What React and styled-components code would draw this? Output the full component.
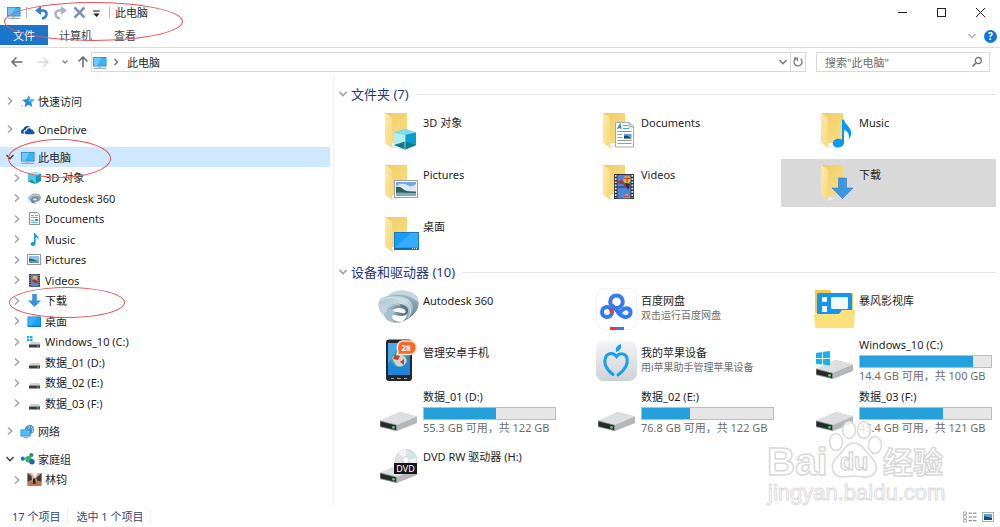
import React, { useState } from "react";
import styled, { createGlobalStyle } from "styled-components";

const GlobalStyle = createGlobalStyle`
    * {
        box-sizing: border-box;
    }
    body {
        margin: 0;
        background: #fff;
        color: #1e1e1e;
        font-family: "Noto Sans", "Noto Sans CJK SC", sans-serif;
        font-size: 11px;
        line-height: 15px;
    }
    button, input {
        font: inherit;
        color: inherit;
    }
    button {
        padding: 0;
        border: 0;
        background: none;
    }
    a {
        color: inherit;
        text-decoration: none;
    }
    ul {
        list-style: none;
        margin: 0;
        padding: 0;
    }
    svg {
        display: block;
        flex: none;
    }
`;

/* ---------- small icons ---------- */

const Small = ({ children, size = 15 }) => (
    <svg width={size} height={size} viewBox="0 0 15 15" aria-hidden="true">
        {children}
    </svg>
);

const PcIcon = () => (
    <Small>
        <rect x="1" y="2" width="13.500" height="9.500" fill="#2c86c4" />
        <rect x="1.800" y="2.800" width="11.900" height="7.900" fill="#3eb1fb" />
        <path d="M1.800 2.800h7.500L5 10.700H1.800z" fill="#6cc8ff" />
        <path d="M6 11.500h3v1.300H6z" fill="#a9b8c4" />
        <path d="M1.500 13.300h12.500" stroke="#8b9cab" />
    </Small>
);

const StarIcon = () => (
    <Small>
        <path d="M8.800 1.500l1.500 3.800 4.300.1-3.300 3.100 1 4.500-3.800-2.200-4 2.400 1-4.500L1.900 5.700l4.800-.4z" fill="#1d8fe0" />
        <path d="M8.800 1.500l1.500 3.800 4.300.1-3.300 2.500-3-1z" fill="#5bb9f3" />
        <path d="M1 12.500l2-1.500" stroke="#8cc5ee" />
    </Small>
);

const CloudIcon = () => (
    <Small>
        <path d="M1 10.500c-.4-2 .9-3.200 2.300-3.300C3.700 4.200 8 2.600 10 5.200c-3.500-.4-4 1.900-4.200 2.600C3.600 8 3.100 10 3.900 11.700H2.300C1.500 11.700 1.100 11 1 10.500z" fill="#174a9b" />
        <path d="M6.400 12.200c-2.400 0-2.500-3.400.2-3.500.3-3 4-3.400 5-.9 1.500-.1 2 .8 1.900 1.600 1.800.5 1.300 2.800-.2 2.800z" fill="#0f52b4" />
    </Small>
);

const CubeIcon = () => (
    <Small>
        <path d="M1 3.500L8 1.500l6 2-5 2.300z" fill="#9be8ef" />
        <path d="M1 3.500l7.500 2.300V14L1 11.500z" fill="#4fccdc" />
        <path d="M8.500 5.800L14 3.500V11l-5.500 3z" fill="#0d9cc0" />
        <path d="M1 11.500l4-1.500 3.500 4z" fill="#148a9c" />
    </Small>
);

const SwirlIcon = () => (
    <Small>
        <ellipse cx="8.300" cy="6.700" rx="5.700" ry="4.200" fill="#86a1b2" />
        <path d="M1 6.500C1.500 4.500 4 4 5 4 9 1.500 13.500 4 14 6.500 11 4.500 7 4.800 5 6c-1.500 1-2 3-1.500 4.500C2 9.800.8 8 1 6.500z" fill="#aec3cf" />
        <path d="M3.500 9.500c0-2.500 3-3.500 5-3.300 2.500.1 3.500 2 1.500 3.500-1 .8-2 .7-3 .3.200 1 1.500 2 3 2.200-3.500 1-6.500-.5-6.500-2.700z" fill="#6c8a9d" />
        <ellipse cx="8" cy="8.500" rx="1.800" ry="1" fill="#fff" />
    </Small>
);

const DocIcon = () => (
    <Small>
        <path d="M2.500 1.500h8l2 2v10h-10z" fill="#fdfdfd" stroke="#8a9096" />
        <path d="M4 4.500h3M8 4.500h3M4 6.500h7M4 9.500h3M4 11.500h7" stroke="#5aaee0" />
        <rect x="8" y="8" width="3" height="2" fill="#3a86bd" />
    </Small>
);

const MusicIcon = () => (
    <Small>
        <path d="M7 1h1.300c.3 2.300 3.900 3 3.200 7-.5-1.500-1.400-2.500-3-2.800v6.300C8.400 14.500 3.700 14.800 3.600 12 3.700 10.300 5.500 9.600 7 10z" fill="#0a9af2" />
    </Small>
);

const PictureIcon = () => (
    <Small>
        <rect x=".5" y="2.500" width="13" height="10" fill="#fff" stroke="#92989d" />
        <rect x="2" y="4" width="10" height="7" fill="#8cc2ee" />
        <path d="M2 6.500c3 0 6 1.500 10 3V11H2z" fill="#2c6a70" />
        <path d="M2 10h10" stroke="#a9c6d8" />
    </Small>
);

const VideoIcon = () => (
    <Small>
        <rect x="2" y="1" width="11" height="13" fill="#36383c" />
        <rect x="4" y="1.500" width="7" height="12" fill="#5a86d6" />
        <circle cx="8" cy="5" r="2.200" fill="#e8b13a" />
        <path d="M4.500 8l3-2 3.500 3-2 1.500z" fill="#a63030" />
        <path d="M3 2v12M12 2v12" stroke="#dfe3e6" strokeDasharray="1 1.300" />
    </Small>
);

const DownIcon = () => (
    <Small>
        <path d="M5.200 1h4.600v6.500H14L7.500 14 1 7.500h4.200z" fill="#3a92e0" />
    </Small>
);

const DesktopIcon = () => (
    <Small>
        <rect x=".5" y="2.500" width="13.500" height="10.500" fill="#1078c8" />
        <path d="M1.300 3.300h11.900v8.200H1.300z" fill="#1aa0fc" />
        <path d="M1.300 3.300h9l-6 8.200h-3z" fill="#3cb2ff" />
    </Small>
);

const DiskBody = () => (
    <>
        <path d="M4 8h8l1.500 2.500h-11z" fill="#cfd1d3" />
        <rect x="2" y="10.500" width="11" height="3" fill="#3a3d3f" />
        <rect x="10" y="11.500" width="2" height="1" fill="#43d344" />
    </>
);

const DiskIcon = () => (
    <Small>
        <DiskBody />
    </Small>
);

const WinDiskIcon = () => (
    <Small>
        <DiskBody />
        <path d="M0 2h2.300v2.300H0zM3 2h2.500v2.300H3zM0 5h2.300v2.300H0zM3 5h2.500v2.300H3z" fill="#12b1ee" />
    </Small>
);

const NetworkIcon = () => (
    <Small>
        <circle cx="9.500" cy="5.500" r="4.700" fill="#4797c9" />
        <path d="M7 2c2-1 3 1 2 2.500S6 5 5.500 6M11 3c2 1 2 3 1.500 5" fill="none" stroke="#a9d5ee" />
        <rect x=".5" y="5.500" width="10" height="7" fill="#2484c6" />
        <path d="M1.300 6.300h8.400v5.400H1.300z" fill="#52bcf8" />
        <path d="M3.500 13.700h4.500" stroke="#8b9cab" />
    </Small>
);

const HomeGroupIcon = () => (
    <Small>
        <path d="M3 7l4-1 4-3M8 8l4 3" stroke="#7bbbd8" fill="none" />
        <circle cx="2.800" cy="6.700" r="2.100" fill="#1f72cc" />
        <circle cx="11.300" cy="3" r="2.100" fill="#2a7fc4" />
        <circle cx="8.500" cy="7.200" r="3.200" fill="#34bb47" />
        <circle cx="12" cy="9.700" r="2.700" fill="#1b62bd" />
    </Small>
);

const UserPhotoIcon = () => (
    <Small>
        <rect x=".5" y="1" width="14" height="13" fill="#c9b6a4" />
        <path d="M.5 1l4 3 .5 4-4.500 2zM9 6l5.500-5v9l-4-1z" fill="#4a3730" />
        <path d="M4.500 1h6L8 6z" fill="#f1eff0" />
        <path d="M.5 10l6.500-2 7.500 2v4H.5z" fill="#b77a4e" />
        <path d="M6 6.500h2.500V12H6z" fill="#33201c" />
    </Small>
);

const ChevronIcon = ({ open, color }) => (
    <svg width="10" height="10" viewBox="0 0 10 10" aria-hidden="true">
        <path
            d={open ? "M1.500 3L5 6.700 8.500 3" : "M3 1.500L6.700 5 3 8.500"}
            fill="none"
            stroke={color || (open ? "#404040" : "#a3a3a3")}
            strokeWidth="1.500"
        />
    </svg>
);

/* ---------- large icons ---------- */

const Large = ({ children }) => (
    <svg width="48" height="48" viewBox="0 0 48 48" aria-hidden="true">
        {children}
    </svg>
);

const Folder = ({ children }) => (
    <Large>
        <defs>
            <linearGradient id="folderBack" x1="0" y1="0" x2="1" y2="1">
                <stop offset="0" stopColor="#efcb66" />
                <stop offset="1" stopColor="#fbdf85" />
            </linearGradient>
            <linearGradient id="folderFlap" x1="0" y1="0" x2="1" y2="1">
                <stop offset="0" stopColor="#ffeaa6" />
                <stop offset="1" stopColor="#f7d77c" />
            </linearGradient>
        </defs>
        <path d="M17 38l-.5 4 8-3z" fill="#eee" />
        <path d="M10 6h22v30H17z" fill="url(#folderBack)" />
        <path d="M10 6l5.500 3.500c1 .7 1.700 2 1.700 3.500v28L11 36.500c-.7-.5-1-1-1-2z" fill="url(#folderFlap)" />
        {children}
    </Large>
);

const FolderCube = () => (
    <Folder>
        <path d="M30 22l11 3.500V38l-11 4.500L19 38V25.500z" fill="#4fc8d6" />
        <path d="M30 22l11 3.500L30 28l-11-2.500z" fill="#7adfe6" />
        <path d="M19 25.500L30 28v14.500L19 38z" fill="#b3ebee" />
        <path d="M30 28l11-2.500V38l-11 4.500z" fill="#079ed0" />
        <path d="M19 38l11-3.500 11 3.500-11 4.500z" fill="#0b7d8c" />
        <path d="M30 28v14" stroke="#d3f7f7" strokeWidth=".7" />
    </Folder>
);

const FolderDoc = () => (
    <Folder>
        <path d="M22.500 15.500H36l4.500 4.500v20h-18z" fill="#fff" stroke="#a3a9ad" />
        <path d="M36 15.500V20h4.500z" fill="#dfe3e6" stroke="#8f969b" strokeWidth=".7" />
        <path d="M24.500 22l2.500-4.500 1 4.500M25.500 20.500h2.500" stroke="#1e8cd4" fill="none" strokeWidth="1.300" />
        <path d="M30 18.500h5M30 21.500h6M24.500 24.500h14" stroke="#46a9df" strokeWidth="1.200" />
        <path d="M24.500 27.500h5M24.500 30.500h5M24.500 33.500h14M24.500 36.500h14" stroke="#8d9ca6" />
        <rect x="31" y="27" width="7.500" height="4.500" fill="#5aa4da" />
        <path d="M31 29l3-.5 4.500 3H31z" fill="#23485a" />
    </Folder>
);

const FolderMusic = () => (
    <Folder>
        <path d="M31 12.500h2c.7 5.500 8.800 8 7 15.500-.6 2-1.500 3.500-2.500 4.300 1.500-5-1-8.300-4.500-9.300v12.500c0 6-11 7-11.300.8.300-4.300 5.600-5.800 9.300-3.800z" fill="#079bf5" />
    </Folder>
);

const FolderPicture = () => (
    <Folder>
        <rect x="19.500" y="21.500" width="23" height="17" fill="#f4f5f6" stroke="#9da2a6" />
        <rect x="21" y="23" width="20" height="14" fill="#77a9e8" />
        <path d="M21 27q6-4 11-1t9-1v7H21z" fill="#d9e9fa" />
        <path d="M21 28q4-1 7 2t13 3v2H21z" fill="#31604f" />
        <path d="M21 33.500l20 .5v3H21z" fill="#79abc4" />
    </Folder>
);

const FolderVideo = () => (
    <Folder>
        <rect x="21" y="15" width="20" height="25" fill="#34353a" />
        <rect x="24.500" y="16" width="13" height="11.500" fill="#4b85db" />
        <rect x="24.500" y="28.500" width="13" height="11" fill="#4b85db" />
        <circle cx="34" cy="20.500" r="3.700" fill="#d7c13c" />
        <path d="M30.500 19.500h7M34 17.500v6" stroke="#d04b38" strokeWidth="1.300" />
        <path d="M25 22l4-1 3 4 4 1-3 3-3-4-5-.5z" fill="#b03044" />
        <path d="M32 24l5 1-2 6z" fill="#2f3038" />
        <path d="M30 39q4-8 7 0z" fill="#dab23a" />
        <path d="M31 37.500h5" stroke="#c63c34" strokeWidth="1.500" />
        <path d="M22.700 16v23M39.300 16v23" stroke="#e9ecee" strokeWidth="1.700" strokeDasharray="1.700 1.500" />
    </Folder>
);

const FolderDown = () => (
    <Folder>
        <path d="M27.500 19h8v10h6.500L31.500 39.500 21 29h6.500z" fill="#3c96e6" stroke="#2d7cc8" strokeWidth=".6" />
    </Folder>
);

const FolderDesktop = () => (
    <Folder>
        <rect x="19" y="21" width="25" height="18" fill="#1479bd" />
        <path d="M20 22h23v14.500H20z" fill="#159dfb" />
        <path d="M20 36.500L36 22h7v14.500z" fill="#35adff" />
        <path d="M20 37.500h23" stroke="#0a67a5" />
        <path d="M37 37.500h6" stroke="#d6ecfa" strokeDasharray="1 1" />
    </Folder>
);

const AutodeskIcon = () => (
    <Large>
        <defs>
            <linearGradient id="swirlA" x1="0" y1="0" x2="1" y2="1">
                <stop offset="0" stopColor="#a9c3d0" />
                <stop offset=".5" stopColor="#c9dbe3" />
                <stop offset="1" stopColor="#7f9cad" />
            </linearGradient>
            <linearGradient id="swirlB" x1="0" y1="0" x2="0" y2="1">
                <stop offset="0" stopColor="#a5bfcb" />
                <stop offset="1" stopColor="#587a90" />
            </linearGradient>
            <linearGradient id="swirlC" x1="0" y1="0" x2="1" y2="0">
                <stop offset="0" stopColor="#b9ced8" />
                <stop offset="1" stopColor="#456479" />
            </linearGradient>
        </defs>
        <path d="M13 11C19 4 36 4 42 12c5 9-1 19-15 25 6-5 7-9 6-13-3-7-12-9-22-7z" fill="url(#swirlB)" />
        <path d="M3.500 18C4 13 9 11 14 11c6 0 15-1 20 4 6 5 5 14-3 19 2-7-2-12-9-14-6-2-9 2-11 6-1 2-1 4 0 6-5-2-8-8-7.500-14z" fill="url(#swirlA)" />
        <path d="M13 11C19 4 33 4 40 10c2 2 3.500 5 3.500 8C37 10 26 8 13 11z" fill="#c5d7df" />
        <path d="M9 29c0-8 8-11 16-10 7 1 10 6 7 10-3 3-8 2-12 1-3-1-4 1-3 3 2 3 6 4 10 4-9 2-18-1-18-8z" fill="url(#swirlC)" />
        <path d="M9.500 29c1 5 5 8 11 8.500-3-2-4-5-2.500-8 1-2 3-3 5-3.500-6-3-12-2-13.500 3z" fill="#a9c1cd" />
        <path d="M18 26c2-3.500 9-4 12.500-.5 1 2-1 3-3.500 2.500-3-.7-6-1-9-2z" fill="#fff" />
        <path d="M4 16c6-4 17-5 25 0s8 12 4 17M10 27c2-6 8-8 15-7" fill="none" stroke="#e2ecf0" strokeWidth=".8" />
    </Large>
);

const NetdiskIcon = () => (
    <Large>
        <rect x="3.500" y="3.500" width="40" height="41" rx="8" fill="#fff" stroke="#f3f3f3" />
        <g fill="none" stroke="#3479f6" strokeWidth="4">
            <circle cx="23.500" cy="16.700" r="6.300" />
            <circle cx="14" cy="27" r="5" />
            <path d="M24.500 30l5-5c3-3.500 8.500-1.500 8 3-.7 4.500-6 5-9 2.500L19 20.500" />
            <path d="M17.500 23.500l2 5" stroke="#d9403a" />
        </g>
        <path d="M17 42h7v3h-7z" fill="#e13b3b" />
        <path d="M24 42h7v3h-7z" fill="#3a78f2" />
    </Large>
);

const StormFolderIcon = () => (
    <Large>
        <path d="M4 5h15l2 3h21v20H4z" fill="#f6cb48" />
        <rect x="6" y="8" width="35" height="22" rx="2" fill="#0f96fb" />
        <path d="M11 12h5v5h-5zM11 21h5v6h-5z" fill="#fff" />
        <rect x="20" y="12" width="17" height="12" rx="1" fill="#f5f9fe" />
        <path d="M3 29h25l3-4h13l-1 16.500c0 1-.6 1.500-1.500 1.500H5.500C4.600 43 4 42.400 4 41.500z" fill="#fbe07c" />
    </Large>
);

const PhoneIcon = () => (
    <Large>
        <rect x="11" y="2.500" width="26" height="41.500" rx="3" fill="#25272a" />
        <rect x="13" y="6" width="22" height="32" fill="#1e86d8" />
        <path d="M13 6h14L13 27z" fill="#48a9ee" />
        <circle cx="24" cy="22" r="8" fill="#38b3a0" />
        <path d="M17 21q4-6 10-3t4 8q-5 6-10 2z" fill="#d9cfd0" />
        <path d="M20 17l5 2-2 4-5-1zM25 25l4-3v6z" fill="#c44130" />
        <path d="M16 41.500h3M22 41.500h4M29 41.500h3" stroke="#a6a9ad" />
        <path d="M28 4h7c9 0 8 13 0 13.500H22l1-2.500c-2-5 0-11 5-11z" fill="#fa6926" stroke="#fbe3d5" strokeWidth="1.500" />
        <text x="31" y="14" textAnchor="middle" fontSize="8" fontWeight="700" fill="#fff">28</text>
    </Large>
);

const AppleAssistantIcon = () => (
    <Large>
        <defs>
            <linearGradient id="assistantBg" x1="0" y1="0" x2="0" y2="1">
                <stop offset="0" stopColor="#f3f4f6" />
                <stop offset="1" stopColor="#ced1d6" />
            </linearGradient>
        </defs>
        <rect x="3" y="4" width="41" height="40" rx="8" fill="url(#assistantBg)" />
        <path d="M20 37.500c-7-5-10-12-7-18 3-4.500 8-3.500 10.500 0 3-4 9-3.500 10.500 1.500 1.500 7-3.500 13-9 17" fill="none" stroke="#18a1ea" strokeWidth="3" strokeLinecap="round" />
        <path d="M23 15c-1-4 1-6.500 5-8 .8 4-1 7-5 8z" fill="#18a1ea" />
    </Large>
);

const DriveShape = () => (
    <>
        <path d="M5 32l20-9 17 4.500V34L22 42 5 38z" fill="#b4b6b9" />
        <path d="M5 31.500L25 23l17 4.500-20 8.500z" fill="#dddee0" />
        <path d="M5 31.500L22 36v6L5 38z" fill="#8b8d8f" />
        <path d="M5.500 32.500L21 36.500V41L5.500 37.300z" fill="#26292b" />
        <circle cx="18.500" cy="38.300" r="1.400" fill="#45e34b" />
    </>
);

const DriveIcon = () => (
    <Large>
        <DriveShape />
    </Large>
);

const WindowsDriveIcon = () => (
    <Large>
        <DriveShape />
        <path d="M5 16l6-1v6H5zM12 14.800l7-.8v7h-7zM5 22h6v5.500l-6-.8zM12 22h7v6.500l-7-.9z" fill="#0fb5f0" />
    </Large>
);

const DvdIcon = () => (
    <Large>
        <DriveShape />
        <circle cx="31" cy="19" r="10.700" fill="#dfe2e4" stroke="#c6c9cb" strokeWidth=".7" />
        <path d="M31 19L23 12q4-4 8-4zM31 19l9-4q2 4 1 8z" fill="#f5f0f5" />
        <path d="M31 19l6-8q3 1.500 4 6z" fill="#cfe9dc" />
        <circle cx="31" cy="19" r="3.300" fill="#fff" stroke="#bfc2c4" strokeWidth=".7" />
        <rect x="19" y="22" width="23" height="11" fill="#161616" />
        <text x="30.500" y="31" textAnchor="middle" fontSize="9" fill="#fff">DVD</text>
    </Large>
);

/* ---------- data ---------- */

const treeData = [
    { name: "快速访问", icon: StarIcon },
    { name: "OneDrive", icon: CloudIcon },
    {
        name: "此电脑",
        icon: PcIcon,
        selected: true,
        children: [
            { name: "3D 对象", icon: CubeIcon },
            { name: "Autodesk 360", icon: SwirlIcon },
            { name: "Documents", icon: DocIcon },
            { name: "Music", icon: MusicIcon },
            { name: "Pictures", icon: PictureIcon },
            { name: "Videos", icon: VideoIcon },
            { name: "下载", icon: DownIcon },
            { name: "桌面", icon: DesktopIcon },
            { name: "Windows_10 (C:)", icon: WinDiskIcon },
            { name: "数据_01 (D:)", icon: DiskIcon },
            { name: "数据_02 (E:)", icon: DiskIcon },
            { name: "数据_03 (F:)", icon: DiskIcon },
        ],
    },
    { name: "网络", icon: NetworkIcon },
    {
        name: "家庭组",
        icon: HomeGroupIcon,
        children: [{ name: "林钧", icon: UserPhotoIcon }],
    },
];

const folders = [
    { name: "3D 对象", icon: FolderCube },
    { name: "Documents", icon: FolderDoc },
    { name: "Music", icon: FolderMusic },
    { name: "Pictures", icon: FolderPicture },
    { name: "Videos", icon: FolderVideo },
    { name: "下载", icon: FolderDown, selected: true },
    { name: "桌面", icon: FolderDesktop },
];

const devices = [
    { name: "Autodesk 360", icon: AutodeskIcon },
    { name: "百度网盘", icon: NetdiskIcon, note: "双击运行百度网盘" },
    { name: "暴风影视库", icon: StormFolderIcon },
    { name: "管理安卓手机", icon: PhoneIcon },
    { name: "我的苹果设备", icon: AppleAssistantIcon, note: "用i苹果助手管理苹果设备" },
    { name: "Windows_10 (C:)", icon: WindowsDriveIcon, used: 86, space: "14.4 GB 可用，共 100 GB" },
    { name: "数据_01 (D:)", icon: DriveIcon, used: 55, space: "55.3 GB 可用，共 122 GB" },
    { name: "数据_02 (E:)", icon: DriveIcon, used: 37, space: "76.8 GB 可用，共 122 GB" },
    { name: "数据_03 (F:)", icon: DriveIcon, used: 63, space: "45.4 GB 可用，共 121 GB" },
    { name: "DVD RW 驱动器 (H:)", icon: DvdIcon },
];

/* ---------- components ---------- */

const TitleBar = () => (
    <TitleRow>
        <PcIcon />
        <Divider />
        <QuickTools>
            <button aria-label="撤消">
                <Small>
                    <path d="M3.500 5.500h6c4.500 1 4 7-1.500 8" fill="none" stroke="#2f7fd0" strokeWidth="2.500" />
                    <path d="M1 5.500L7 1v9z" fill="#2f7fd0" />
                </Small>
            </button>
            <button aria-label="恢复">
                <Small>
                    <path d="M11.500 5.500h-6c-4.500 1-4 7 1.500 8" fill="none" stroke="#a9b6cf" strokeWidth="2.500" />
                    <path d="M14 5.500L8 1v9z" fill="#a9b6cf" />
                </Small>
            </button>
            <button aria-label="删除">
                <Small>
                    <path d="M2.500 2.500l10 10M12.500 2.500l-10 10" stroke="#7e93b8" strokeWidth="2.500" />
                </Small>
            </button>
            <button aria-label="自定义快速访问工具栏">
                <Small size={11}>
                    <path d="M3 5.500h9" stroke="#222" strokeWidth="1.500" />
                    <path d="M3 9h9l-4.500 4.500z" fill="#222" />
                </Small>
            </button>
        </QuickTools>
        <Divider />
        <span>此电脑</span>
        <WindowButtons>
            <button aria-label="最小化">
                <svg width="11" height="11" viewBox="0 0 11 11">
                    <path d="M1 5.500h9" stroke="#222" />
                </svg>
            </button>
            <button aria-label="最大化">
                <svg width="11" height="11" viewBox="0 0 11 11">
                    <rect x="1.500" y="1.500" width="8" height="8" fill="none" stroke="#222" />
                </svg>
            </button>
            <button aria-label="关闭">
                <svg width="11" height="11" viewBox="0 0 11 11">
                    <path d="M1 1l9 9M10 1l-9 9" stroke="#222" />
                </svg>
            </button>
        </WindowButtons>
    </TitleRow>
);

const Ribbon = () => (
    <RibbonRow>
        <FileTab>文件</FileTab>
        <Tab>计算机</Tab>
        <Tab>查看</Tab>
        <RibbonEnd>
            <button aria-label="展开功能区">
                <ChevronIcon open color="#b0b0b0" />
            </button>
            <HelpButton aria-label="帮助">?</HelpButton>
        </RibbonEnd>
    </RibbonRow>
);

const ArrowIcon = ({ d, color }) => (
    <svg width="12" height="12" viewBox="0 0 12 12" aria-hidden="true">
        <path d={d} fill="none" stroke={color} strokeWidth="1.500" />
    </svg>
);

const NavBar = () => (
    <NavRow>
        <NavButtons>
            <button aria-label="后退">
                <ArrowIcon d="M11.500 6H1M5.500 1.500L1 6l4.500 4.500" color="#6a6a6a" />
            </button>
            <button aria-label="前进">
                <ArrowIcon d="M.5 6H11M6.500 1.500L11 6l-4.500 4.500" color="#d8d8d8" />
            </button>
            <button aria-label="最近位置">
                <svg width="8" height="8" viewBox="0 0 8 8" aria-hidden="true">
                    <path d="M1.500 2.500L4 5l2.500-2.500" fill="none" stroke="#888" strokeWidth="1.500" />
                </svg>
            </button>
            <button aria-label="上移">
                <ArrowIcon d="M6 11.500V1M1.500 5.500L6 1l4.500 4.500" color="#6a6a6a" />
            </button>
        </NavButtons>
        <AddressBox>
            <PcIcon />
            <svg width="8" height="8" viewBox="0 0 8 8" aria-hidden="true">
                <path d="M2.500 1L5.500 4l-3 3" fill="none" stroke="#666" strokeWidth="1.300" />
            </svg>
            <a href="#pc">此电脑</a>
            <AddressEnd>
                <button aria-label="历史记录">
                    <ChevronIcon open color="#777" />
                </button>
                <RefreshButton aria-label="刷新">
                    <svg width="12" height="12" viewBox="0 0 12 12">
                        <path d="M8.500 2.800A4 4 0 1 1 3.800 2.600M2 2.200h3.300v3" fill="none" stroke="#777" strokeWidth="1.300" />
                    </svg>
                </RefreshButton>
            </AddressEnd>
        </AddressBox>
        <SearchBox>
            <input type="search" aria-label="搜索" placeholder={'搜索"此电脑"'} />
            <svg width="12" height="12" viewBox="0 0 12 12" aria-hidden="true">
                <circle cx="7.300" cy="4.500" r="3" fill="none" stroke="#777" strokeWidth="1.300" />
                <path d="M5 6.900L1.500 10.500" stroke="#777" strokeWidth="1.700" />
            </svg>
        </SearchBox>
    </NavRow>
);

const TreeItem = ({ item, level = 0 }) => {
    const [open, setOpen] = useState(Boolean(item.children));
    const Icon = item.icon;
    return (
        <li>
            <TreeRow $level={level} $selected={item.selected}>
                <Toggle aria-label={item.name} aria-expanded={open} onClick={() => setOpen(!open)}>
                    <ChevronIcon open={open} />
                </Toggle>
                <Icon />
                <a href="#item">{item.name}</a>
            </TreeRow>
            {open && item.children && (
                <SubTree>
                    {item.children.map((child) => (
                        <TreeItem key={child.name} item={child} level={level + 1} />
                    ))}
                </SubTree>
            )}
        </li>
    );
};

const TileGroup = ({ title, items }) => {
    const [open, setOpen] = useState(true);
    return (
        <section>
            <GroupHeader aria-expanded={open} onClick={() => setOpen(!open)}>
                <ChevronIcon open={open} color="#999" />
                {title} ({items.length})
            </GroupHeader>
            {open && (
                <TileGrid>
                    {items.map(({ name, icon: Icon, note, used, space, selected }) => (
                        <Tile key={name} href="#item" $selected={selected}>
                            <Icon />
                            <TileText $drive={used !== undefined}>
                                <span>{name}</span>
                                {note && <Note>{note}</Note>}
                                {used !== undefined && (
                                    <>
                                        <Bar>
                                            <BarFill style={{ width: `${used}%` }} />
                                        </Bar>
                                        <Space>{space}</Space>
                                    </>
                                )}
                            </TileText>
                        </Tile>
                    ))}
                </TileGrid>
            )}
        </section>
    );
};

const StatusBar = () => (
    <StatusRow>
        <StatusText>17 个项目</StatusText>
        <StatusText>选中 1 个项目</StatusText>
        <ViewButtons>
            <button aria-label="详细信息">
                <svg width="15" height="12" viewBox="0 0 15 12">
                    <path d="M1.500 1h3v2.500h-3zM1.500 4.700h3v2.500h-3zM1.500 8.500h3V11h-3z" fill="#fff" stroke="#999" strokeWidth=".8" />
                    <path d="M6.500 2.200h8M6.500 6h8M6.500 9.700h8" stroke="#777" strokeDasharray="3.500 1" />
                </svg>
            </button>
            <button aria-label="大图标">
                <svg width="12" height="12" viewBox="0 0 12 12">
                    <rect x=".5" y="1.500" width="11" height="9" fill="#fff" stroke="#9fb0bd" />
                    <rect x="2" y="3" width="8" height="6" fill="#5aa2d8" />
                    <path d="M2 5l8 2v2H2z" fill="#1d4a6d" />
                </svg>
            </button>
        </ViewButtons>
    </StatusRow>
);

const BaiduMark = () => (
    <Watermark width="190" height="80" viewBox="0 0 190 80">
        <g fill="#fff" fillOpacity=".8" stroke="#d9d9d9" strokeWidth="1.500">
            <ellipse cx="71" cy="39" rx="6.500" ry="8.500" />
            <ellipse cx="84" cy="27" rx="6.500" ry="8.500" />
            <ellipse cx="99" cy="27" rx="6.500" ry="8.500" />
            <ellipse cx="110" cy="42" rx="6.500" ry="8.500" />
            <path d="M89 40c8 0 11 8 16 13 9 8 8 20-3 21-5 .5-8-1-13-1s-8 1.500-12 1c-11-1-13-13-4-21 6-5 8-13 16-13z" />
            <g fontWeight="700" fontFamily='"Liberation Sans", "Noto Sans CJK SC", sans-serif'>
                <text x="2" y="72" fontSize="39">Bai</text>
                <text x="75" y="67" fontSize="23">du</text>
                <text x="118" y="70" fontSize="30">经验</text>
            </g>
        </g>
    </Watermark>
);

export default function App() {
    return (
        <Window>
            <GlobalStyle />
            <TitleBar />
            <Ribbon />
            <NavBar />
            <Body>
                <Sidebar>
                    <Tree>
                        {treeData.map((item) => (
                            <TreeItem key={item.name} item={item} />
                        ))}
                    </Tree>
                </Sidebar>
                <Splitter />
                <Content>
                    <TileGroup title="文件夹" items={folders} />
                    <TileGroup title="设备和驱动器" items={devices} />
                </Content>
            </Body>
            <StatusBar />
            <Ring $left={4} $top={2} $width={179} $height={39} />
            <Ring $left={8} $top={139} $width={103} $height={39} />
            <Ring $left={9} $top={287} $width={116} $height={31} />
            <BaiduMark />
            <WatermarkUrl>jingyan.baidu.com</WatermarkUrl>
        </Window>
    );
}

const Window = styled.div`
    position: relative;
    display: flex;
    flex-direction: column;
    min-height: 100vh;
`;

const TitleRow = styled.header`
    display: flex;
    align-items: center;
    gap: 5px;
    height: 24px;
    padding-left: 6px;
`;

const Divider = styled.span`
    width: 1px;
    height: 11px;
    background: #b5b5b5;
`;

const QuickTools = styled.div`
    display: flex;
    align-items: center;
    gap: 4px;
    margin: 0 2px;
`;

const WindowButtons = styled.div`
    display: flex;
    margin-left: auto;
    button {
        display: flex;
        align-items: center;
        justify-content: center;
        width: 39px;
        height: 24px;
    }
`;

const RibbonRow = styled.nav`
    display: flex;
    align-items: flex-start;
    height: 24px;
    padding-top: 1px;
    border-bottom: 1px solid #dcdcdc;
`;

const Tab = styled.button`
    height: 20px;
    padding: 0 11px;
    color: #444;
`;

const FileTab = styled(Tab)`
    width: 48px;
    background: #1976ca;
    color: #fff;
`;

const RibbonEnd = styled.div`
    display: flex;
    align-items: center;
    gap: 7px;
    height: 22px;
    margin-left: auto;
    padding-right: 3px;
`;

const HelpButton = styled.button`
    width: 13px;
    height: 13px;
    border-radius: 50%;
    background: #0f78d4;
    color: #fff;
    font-size: 10px;
    font-weight: 700;
    line-height: 13px;
`;

const NavRow = styled.div`
    display: flex;
    gap: 10px;
    padding: 4px 10px 4px 11px;
`;

const NavButtons = styled.div`
    display: flex;
    align-items: center;
    gap: 12px;
    width: 70px;
    button {
        display: flex;
    }
    button:first-child {
        margin-right: 2px;
    }
    button:last-child {
        margin-left: -4px;
    }
`;

const AddressBox = styled.div`
    flex: 1;
    display: flex;
    align-items: center;
    gap: 5px;
    height: 20px;
    border: 1px solid #d9d9d9;
    a {
        margin-left: 2px;
    }
`;

const AddressEnd = styled.div`
    display: flex;
    align-items: center;
    align-self: stretch;
    gap: 2px;
    margin-left: auto;
`;

const RefreshButton = styled.button`
    display: flex;
    align-items: center;
    justify-content: center;
    align-self: stretch;
    width: 15px;
    border-left: 1px solid #d9d9d9;
`;

const SearchBox = styled.div`
    display: flex;
    align-items: center;
    width: 174px;
    height: 20px;
    padding: 0 6px 0 8px;
    border: 1px solid #d9d9d9;
    input {
        flex: 1;
        min-width: 0;
        padding: 0;
        border: 0;
        outline: 0;
        background: none;
    }
    input::placeholder {
        color: #6d6d6d;
        opacity: 1;
    }
`;

const Body = styled.div`
    flex: 1;
    display: flex;
`;

const Sidebar = styled.aside`
    flex: 0 0 33%;
    padding-top: 15px;
`;

const Tree = styled.ul`
    display: flex;
    flex-direction: column;
    gap: 8px;
`;

const TreeRow = styled.div`
    display: flex;
    align-items: center;
    gap: 3px;
    height: 20px;
    padding-left: ${({ $level }) => 5 + $level * 7}px;
    background: ${({ $selected }) => ($selected ? "#cde8ff" : "none")};
    white-space: nowrap;
`;

const SubTree = styled.ul`
    li:nth-child(odd) ${TreeRow} {
        height: 21px;
    }
`;

const Toggle = styled.button`
    display: flex;
    width: 12px;
`;

const Splitter = styled.div`
    width: 4px;
    border-right: 1px solid #f0f0f0;
`;

const Content = styled.main`
    flex: 1;
    display: flex;
    flex-direction: column;
    gap: 4px;
    padding: 9px 4px 8px 4px;
`;

const GroupHeader = styled.button`
    display: flex;
    align-items: center;
    gap: 3px;
    width: 100%;
    height: 18px;
    color: #24357f;
    font-size: 13px;
    &::after {
        content: "";
        flex: 1;
        height: 1px;
        margin-left: 4px;
        background: #e6e6e6;
    }
`;

const TileGrid = styled.div`
    display: grid;
    grid-template-columns: repeat(auto-fill, 215px);
    gap: 4px 3px;
    margin-top: 4px;
    padding-left: 7px;
`;

const Tile = styled.a`
    display: flex;
    height: 48px;
    padding: 0 4px 0 30px;
    background: ${({ $selected }) => ($selected ? "#d9d9d9" : "none")};
    white-space: nowrap;
`;

const TileText = styled.div`
    flex: 1;
    display: flex;
    flex-direction: column;
    padding-top: ${({ $drive }) => ($drive ? 0 : 8)}px;
`;

const Note = styled.span`
    color: #6d6d6d;
    font-size: 10px;
`;

const Bar = styled.div`
    height: 13px;
    margin-top: 3px;
    border: 1px solid #bcbcbc;
    background: #e6e6e6;
`;

const BarFill = styled.div`
    height: 100%;
    background: #26a0da;
`;

const Space = styled.span`
    color: #6d6d6d;
`;

const StatusRow = styled.footer`
    display: flex;
    align-items: center;
    height: 21px;
    padding: 0 6px 0 12px;
    color: #35476f;
`;

const StatusText = styled.span`
    padding-right: 7px;
    margin-right: 8px;
    border-right: 1px solid #eee;
`;

const ViewButtons = styled.div`
    display: flex;
    gap: 5px;
    margin-left: auto;
`;

const Ring = styled.div`
    position: absolute;
    left: ${({ $left }) => $left}px;
    top: ${({ $top }) => $top}px;
    width: ${({ $width }) => $width}px;
    height: ${({ $height }) => $height}px;
    border: 1px solid #ee5358;
    border-radius: 50%;
    pointer-events: none;
`;

const Watermark = styled.svg`
    position: absolute;
    left: 765px;
    top: 403px;
    pointer-events: none;
`;

const WatermarkUrl = styled.div`
    position: absolute;
    left: 768px;
    top: 482px;
    color: #fff;
    font-family: "Liberation Sans", sans-serif;
    font-size: 22px;
    line-height: 22px;
    -webkit-text-stroke: 1px #dcdcdc;
    pointer-events: none;
`;
